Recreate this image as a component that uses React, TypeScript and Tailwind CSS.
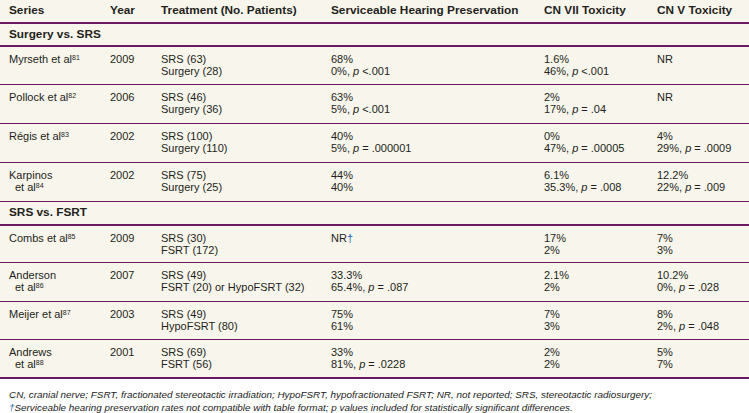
const font = { fontFamily: '"Liberation Sans", Arial, sans-serif' };

type Row = {
  series: React.ReactNode;
  year: string;
  treatment: string[];
  hearing: React.ReactNode[];
  cn7: React.ReactNode[];
  cn5: React.ReactNode[];
  h: string;
  last?: boolean;
};

const P = () => <span className="italic">p</span>;

const Sup = ({ n }: { n: number }) => <sup className="text-[7px]">{n}</sup>;

const Ref = ({ name, n, wrap }: { name: string; n: number; wrap?: boolean }) =>
  wrap ? (
    <>
      <div>{name}</div>
      <div className="pl-[6px]">
        et al<Sup n={n} />
      </div>
    </>
  ) : (
    <div>
      {name} et al<Sup n={n} />
    </div>
  );

const Dagger = () => <span className="text-[#1f5fb0]">†</span>;

const surgeryRows: Row[] = [
  {
    series: <Ref name="Myrseth" n={81} />,
    year: "2009",
    treatment: ["SRS (63)", "Surgery (28)"],
    hearing: ["68%", <>0%, <P /> &lt;.001</>],
    cn7: ["1.6%", <>46%, <P /> &lt;.001</>],
    cn5: ["NR"],
    h: "h-[38px]",
  },
  {
    series: <Ref name="Pollock" n={82} />,
    year: "2006",
    treatment: ["SRS (46)", "Surgery (36)"],
    hearing: ["63%", <>5%, <P /> &lt;.001</>],
    cn7: ["2%", <>17%, <P /> = .04</>],
    cn5: ["NR"],
    h: "h-[39px]",
  },
  {
    series: <Ref name="Régis" n={83} />,
    year: "2002",
    treatment: ["SRS (100)", "Surgery (110)"],
    hearing: ["40%", <>5%, <P /> = .000001</>],
    cn7: ["0%", <>47%, <P /> = .00005</>],
    cn5: ["4%", <>29%, <P /> = .0009</>],
    h: "h-[39px]",
  },
  {
    series: <Ref name="Karpinos" n={84} wrap />,
    year: "2002",
    treatment: ["SRS (75)", "Surgery (25)"],
    hearing: ["44%", "40%"],
    cn7: ["6.1%", <>35.3%, <P /> = .008</>],
    cn5: ["12.2%", <>22%, <P /> = .009</>],
    h: "h-[39px]",
  },
];

const fsrtRows: Row[] = [
  {
    series: <Ref name="Combs" n={85} />,
    year: "2009",
    treatment: ["SRS (30)", "FSRT (172)"],
    hearing: [<>NR<Dagger /></>],
    cn7: ["17%", "2%"],
    cn5: ["7%", "3%"],
    h: "h-[37px]",
  },
  {
    series: <Ref name="Anderson" n={86} wrap />,
    year: "2007",
    treatment: ["SRS (49)", "FSRT (20) or HypoFSRT (32)"],
    hearing: ["33.3%", <>65.4%, <P /> = .087</>],
    cn7: ["2.1%", "2%"],
    cn5: ["10.2%", <>0%, <P /> = .028</>],
    h: "h-[39px]",
  },
  {
    series: <Ref name="Meijer" n={87} />,
    year: "2003",
    treatment: ["SRS (49)", "HypoFSRT (80)"],
    hearing: ["75%", "61%"],
    cn7: ["7%", "3%"],
    cn5: ["8%", <>2%, <P /> = .048</>],
    h: "h-[38px]",
  },
  {
    series: <Ref name="Andrews" n={88} wrap />,
    year: "2001",
    treatment: ["SRS (69)", "FSRT (56)"],
    hearing: ["33%", <>81%, <P /> = .0228</>],
    cn7: ["2%", "2%"],
    cn5: ["5%", "7%"],
    h: "h-[39px]",
    last: true,
  },
];

const cols = "grid grid-cols-[110px_51px_170px_213px_113px_92px]";

const Lines = ({ items }: { items: React.ReactNode[] }) => (
  <div>
    {items.map((t, i) => (
      <div key={i}>{t}</div>
    ))}
  </div>
);

const DataRow = ({ row }: { row: Row }) => (
  <div
    className={`${cols} ${row.h} pt-[6px] leading-[12px] border-[#6b1a5f] ${
      row.last ? "border-b-2" : "border-b"
    }`}
  >
    <div className="pl-[9px]">{row.series}</div>
    <div>{row.year}</div>
    <Lines items={row.treatment} />
    <Lines items={row.hearing} />
    <Lines items={row.cn7} />
    <Lines items={row.cn5} />
  </div>
);

const Section = ({ title, h }: { title: string; h: string }) => (
  <div className={`${h} flex items-center pl-[9px] font-bold text-[11.8px] border-b-2 border-[#6b1a5f]`}>
    {title}
  </div>
);

export default function App() {
  return (
    <div className="w-[749px] h-[413px] bg-white text-[#231f20] text-[11px]" style={font}>
      <div className="bg-[#f8f5ec]">
        <div className={`${cols} h-[24px] items-center font-bold text-[11.8px] border-b-2 border-[#6b1a5f]`}>
          <div className="pl-[9px]">Series</div>
          <div>Year</div>
          <div>Treatment (No. Patients)</div>
          <div>Serviceable Hearing Preservation</div>
          <div>CN VII Toxicity</div>
          <div>CN V Toxicity</div>
        </div>
        <Section title="Surgery vs. SRS" h="h-[23px]" />
        {surgeryRows.map((r, i) => (
          <DataRow key={i} row={r} />
        ))}
        <Section title="SRS vs. FSRT" h="h-[24px]" />
        {fsrtRows.map((r, i) => (
          <DataRow key={i} row={r} />
        ))}
      </div>
      <div className="pl-[9px] pt-[9px] italic text-[9.9px] leading-[13px] text-[#222]">
        <div>
          CN, cranial nerve; FSRT, fractionated stereotactic irradiation; HypoFSRT, hypofractionated FSRT; NR, not
          reported; SRS, stereotactic radiosurgery;
        </div>
        <div>
          <Dagger />
          Serviceable hearing preservation rates not compatible with table format; p values included for statistically
          significant differences.
        </div>
      </div>
    </div>
  );
}
